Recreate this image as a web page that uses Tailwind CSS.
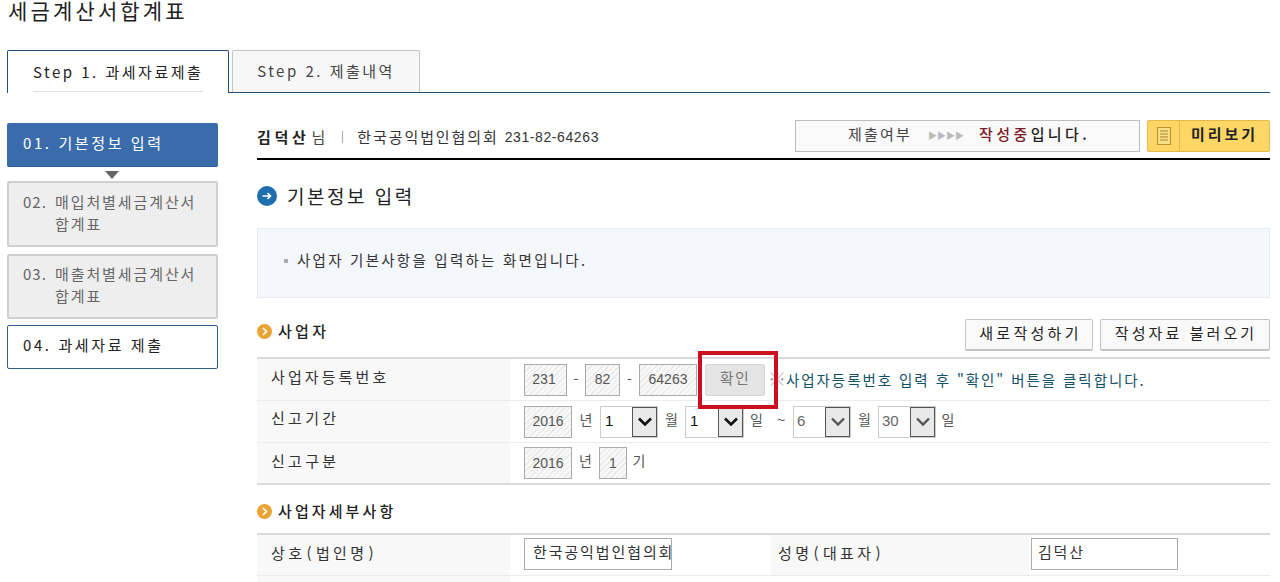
<!DOCTYPE html>
<html lang="ko">
<head>
<meta charset="utf-8">
<script src="https://cdn.jsdelivr.net/npm/@tailwindcss/browser@4"></script>
</head>
<body class="bg-white overflow-hidden font-['Noto_Sans_CJK_KR','Liberation_Sans',sans-serif] text-[#222]">
<div class="w-[1280px] h-[582px] overflow-hidden">
  <div class="h-[50px] pl-[8px]"><h1 class="text-[21px] leading-[20px] font-normal tracking-[3.15px] text-[#222]">세금계산서합계표</h1></div>

  <div class="flex items-end h-[43px] ml-[7px] mr-[10px] border-b border-[#1f4e79] text-[15px] tracking-[2.5px]">
    <div class="w-[222px] h-[43px] -mb-px bg-white border border-b-0 border-[#1f4e79] rounded-t-[2px] flex flex-col items-center">
      <span class="mt-[10px] h-[24px] leading-[21px] w-[170px] text-center whitespace-nowrap">Step 1. 과세자료제출</span>
      <span class="w-[170px] h-px bg-[#dde3ea] mt-[6px]"></span>
    </div>
    <div class="ml-[3px] w-[188px] h-[42px] bg-[#f7f7f7] border border-b-0 border-[#c4c4c4] rounded-t-[2px] text-center leading-[40px] text-[#444]">Step 2. 제출내역</div>
  </div>

  <div class="flex pl-[7px] pr-[10px] pt-[30px]">
    <nav class="w-[211px] shrink-0 text-[15px] tracking-[1.9px]">
      <div class="h-[44px] bg-[#3a6cab] rounded-[2px] text-white flex items-center pl-[16px] pb-[2px] border-b border-[#2e5c96] tracking-[2.6px]">01. 기본정보 입력</div>
      <div class="h-[14px] flex justify-center items-start pt-[4px] pr-[2px]">
        <svg width="14" height="8" viewBox="0 0 14 8"><path d="M0 0h14L7 8z" fill="#666"/></svg>
      </div>
      <div class="h-[66px] bg-[#eeeeee] rounded-[2px] border-2 border-[#cfcfcf] text-[#666] flex pl-[14px] pt-[8px] leading-[22px]">
        <span class="w-[32px] shrink-0 tracking-[1px]">02.</span><span class="w-[155px]">매입처별세금계산서<br>합계표</span>
      </div>
      <div class="h-[65px] mt-[7px] bg-[#eeeeee] rounded-[2px] border-2 border-[#cfcfcf] text-[#666] flex pl-[14px] pt-[7px] leading-[22px]">
        <span class="w-[32px] shrink-0 tracking-[1px]">03.</span><span class="w-[155px]">매출처별세금계산서<br>합계표</span>
      </div>
      <div class="h-[44px] mt-[6px] bg-white rounded-[2px] border border-[#2a5f92] text-[#222] flex items-center pl-[15px] pb-[3px] tracking-[2.6px]">04. 과세자료 제출</div>
    </nav>

    <main class="ml-[39px] w-[1013px] -mt-[3px]">
      <div class="h-[40px] border-b-[2px] border-black flex items-start justify-between">
        <div class="h-[38px] flex items-center pb-[4px] text-[15px]">
          <b class="font-bold tracking-[3.7px] text-[#222]">김덕산</b>
          <span class="ml-[2px] text-[#444]">님</span>
          <span class="ml-[17px] mr-[13px] w-px h-[12px] bg-[#aaa]"></span>
          <span class="tracking-[1.9px] ml-[1px] text-[#333]">한국공익법인협의회</span>
          <span class="ml-[6px] text-[14px] text-[#333] tracking-[0.6px] font-['Liberation_Sans',sans-serif]">231-82-64263</span>
        </div>
        <div class="flex">
          <div class="w-[345px] h-[32px] bg-[#f9f9f9] border border-[#bdbdbd] flex items-center text-[15px] pb-[3px] tracking-[2.2px] pl-[52px] text-[#444]">
            <span>제출여부</span>
            <span class="ml-[16px] pt-[3px] text-[#bbb] text-[9px] tracking-[0px]">▶▶▶▶</span>
            <span class="ml-[15px] text-[#7a1c2a] font-medium tracking-[3.4px]">작성중</span><span class="text-[#222] font-medium tracking-[3.4px]">입니다.</span>
          </div>
          <div class="ml-[7px] w-[123px] h-[32px] bg-[#fcd766] border border-[#e6b84a] rounded-[2px] flex items-center">
            <div class="w-[32px] h-full flex items-center justify-center border-r border-[#e6b84a]">
              <svg width="14" height="18" viewBox="0 0 14 18" fill="none"><rect x=".5" y=".5" width="13" height="17" fill="#f8e08a" stroke="#b8912c"/><path d="M3 4h8M3 7h8M3 10h8M3 13h8" stroke="#a8842a"/></svg>
            </div>
            <b class="flex-1 text-center text-[15px] pb-[3px] font-bold tracking-[3px] text-[#222]">미리보기</b>
          </div>
        </div>
      </div>

      <div class="flex items-center h-[68px] pt-[3px]">
        <svg width="20" height="20" viewBox="0 0 20 20"><circle cx="10" cy="10" r="10" fill="#1f6fb0"/><path d="M5.5 10h8M10.5 7l3 3-3 3" stroke="#fff" stroke-width="1.6" fill="none"/></svg>
        <h2 class="ml-[10px] text-[19px] font-normal tracking-[2.5px] text-[#222] leading-[24px]">기본정보 입력</h2>
      </div>

      <div class="h-[70px] bg-[#f4f7fc] border border-[#e7ecf3] flex items-center pl-[26px] pb-[7px] text-[14.5px] tracking-[2.25px] text-[#333]">
        <span class="w-[4px] h-[4px] bg-[#aaa] mr-[9px] mt-[2px]"></span>사업자 기본사항을 입력하는 화면입니다.
      </div>

      <div class="flex items-center justify-between h-[32px] mt-[21px] mb-[6px]">
        <div class="flex items-center pb-[7px]">
          <svg width="15" height="15" viewBox="0 0 15 15"><circle cx="7.5" cy="7.5" r="7.5" fill="#eaa233"/><path d="M6 4l3.5 3.5L6 11" stroke="#fff" stroke-width="1.7" fill="none"/></svg>
          <h3 class="ml-[6px] text-[15px] font-medium tracking-[3.3px] text-[#222]">사업자</h3>
        </div>
        <div class="flex gap-[7px] text-[15px]">
          <div class="w-[128px] h-[32px] pb-[3px] bg-[#f9f9f9] border border-[#c4c4c4] border-b-2 rounded-[2px] flex items-center justify-center text-[#222] tracking-[3.3px] pl-[3px]">새로작성하기</div>
          <div class="w-[170px] h-[32px] pb-[3px] bg-[#f9f9f9] border border-[#c4c4c4] border-b-2 rounded-[2px] flex items-center justify-center text-[#222] tracking-[3.1px] pl-[2px]">작성자료 불러오기</div>
        </div>
      </div>

      <div class="border-t-2 border-b-2 border-[#d9d9d9] text-[14px]">
        <div class="flex h-[42px] border-b border-[#ececec]">
          <div class="w-[253px] bg-[#f8f8f8] flex items-center pl-[14px] pb-[5px] text-[15px] tracking-[3.1px] text-[#333]">사업자등록번호</div>
          <div class="flex-1 flex items-center pl-[14px] text-[#555]">
            <span class="w-[43px] h-[32px] pr-[3px] border border-[#aaa] flex items-center justify-center bg-[repeating-linear-gradient(135deg,#e8e8e8_0,#e8e8e8_1px,#f8f8f8_1px,#f8f8f8_4px)] font-['Liberation_Sans',sans-serif]">231</span>
            <span class="w-[18px] text-center">-</span>
            <span class="w-[35px] h-[32px] border border-[#aaa] flex items-center justify-center bg-[repeating-linear-gradient(135deg,#e8e8e8_0,#e8e8e8_1px,#f8f8f8_1px,#f8f8f8_4px)] font-['Liberation_Sans',sans-serif]">82</span>
            <span class="w-[19px] text-center">-</span>
            <span class="w-[58px] h-[32px] border border-[#aaa] flex items-center justify-center bg-[repeating-linear-gradient(135deg,#e8e8e8_0,#e8e8e8_1px,#f8f8f8_1px,#f8f8f8_4px)] font-['Liberation_Sans',sans-serif]">64263</span>
            <span class="relative ml-[8px] w-[60px] h-[32px] pb-[3px] bg-[#e4e4e4] border border-[#d6d6d6] rounded-[2px] flex items-center justify-center text-[15px] text-[#777] tracking-[1.5px]">확인
              <span class="absolute left-[-8px] top-[-14px] w-[80px] h-[58px] border-[4px] border-[#cc1022]"></span>
            </span>
            <span class="ml-[3px] pb-[3px] text-[14.5px] tracking-[1.95px] text-[#125068] whitespace-nowrap"><span class="text-[#aaa] text-[18px] tracking-[0px]">※</span>사업자등록번호 입력 후 "확인" 버튼을 클릭합니다.</span>
          </div>
        </div>
        <div class="flex h-[42px] border-b border-[#ececec]">
          <div class="w-[253px] bg-[#f8f8f8] flex items-center pl-[14px] pb-[7px] text-[15px] tracking-[3.3px] text-[#333]">신고기간</div>
          <div class="flex-1 flex items-center pl-[14px] text-[#555]">
            <span class="w-[48px] h-[32px] border border-[#aaa] flex items-center justify-center bg-[repeating-linear-gradient(135deg,#e8e8e8_0,#e8e8e8_1px,#f8f8f8_1px,#f8f8f8_4px)] font-['Liberation_Sans',sans-serif]">2016</span>
            <span class="w-[28px] text-center pb-[5px]">년</span>
            <span class="w-[58px] h-[32px] border border-[#ccc] flex items-center justify-between pl-[4px] font-['Liberation_Sans',sans-serif] text-[#111] text-[15px]">1
              <span class="w-[25px] h-[30px] bg-[#e9e9e9] border border-[#555] flex items-center justify-center"><svg width="14" height="10" viewBox="0 0 14 10"><path d="M1 1.5l6 6 6-6" stroke="#111" stroke-width="2.6" fill="none"/></svg></span>
            </span>
            <span class="w-[27px] text-center pb-[5px]">월</span>
            <span class="w-[59px] h-[32px] border border-[#ccc] flex items-center justify-between pl-[4px] font-['Liberation_Sans',sans-serif] text-[#111] text-[15px]">1
              <span class="w-[25px] h-[30px] bg-[#e9e9e9] border border-[#555] flex items-center justify-center"><svg width="14" height="10" viewBox="0 0 14 10"><path d="M1 1.5l6 6 6-6" stroke="#111" stroke-width="2.6" fill="none"/></svg></span>
            </span>
            <span class="w-[25px] text-center pb-[5px]">일</span>
            <span class="w-[24px] text-center pb-[3px] font-['Liberation_Sans',sans-serif]">~</span>
            <span class="w-[58px] h-[32px] border border-[#ccc] flex items-center justify-between pl-[3px] font-['Liberation_Sans',sans-serif] text-[#666] text-[15px]">6
              <span class="w-[25px] h-[30px] bg-[#e9e9e9] border border-[#555] flex items-center justify-center"><svg width="14" height="10" viewBox="0 0 14 10"><path d="M1 1.5l6 6 6-6" stroke="#555" stroke-width="2.4" fill="none"/></svg></span>
            </span>
            <span class="w-[27px] text-center pb-[5px]">월</span>
            <span class="w-[58px] h-[32px] border border-[#ccc] flex items-center justify-between pl-[3px] font-['Liberation_Sans',sans-serif] text-[#666] text-[15px]">30
              <span class="w-[25px] h-[30px] bg-[#e9e9e9] border border-[#555] flex items-center justify-center"><svg width="14" height="10" viewBox="0 0 14 10"><path d="M1 1.5l6 6 6-6" stroke="#555" stroke-width="2.4" fill="none"/></svg></span>
            </span>
            <span class="w-[24px] text-center pb-[5px]">일</span>
          </div>
        </div>
        <div class="flex h-[40px]">
          <div class="w-[253px] bg-[#f8f8f8] flex items-center pl-[14px] pb-[3px] text-[15px] tracking-[3.3px] text-[#333]">신고구분</div>
          <div class="flex-1 flex items-center pl-[14px] text-[#555]">
            <span class="w-[48px] h-[32px] border border-[#aaa] flex items-center justify-center bg-[repeating-linear-gradient(135deg,#e8e8e8_0,#e8e8e8_1px,#f8f8f8_1px,#f8f8f8_4px)] font-['Liberation_Sans',sans-serif]">2016</span>
            <span class="w-[27px] text-center pb-[5px]">년</span>
            <span class="w-[28px] h-[32px] border border-[#aaa] flex items-center justify-center bg-[repeating-linear-gradient(135deg,#e8e8e8_0,#e8e8e8_1px,#f8f8f8_1px,#f8f8f8_4px)] font-['Liberation_Sans',sans-serif]">1</span>
            <span class="w-[24px] text-center pb-[5px]">기</span>
          </div>
        </div>
      </div>

      <div class="flex items-center h-[48px] pt-[4px]">
        <svg width="15" height="15" viewBox="0 0 15 15"><circle cx="7.5" cy="7.5" r="7.5" fill="#eaa233"/><path d="M6 4l3.5 3.5L6 11" stroke="#fff" stroke-width="1.7" fill="none"/></svg>
        <h3 class="ml-[6px] text-[15px] font-medium tracking-[3.1px] text-[#222]">사업자세부사항</h3>
      </div>

      <div class="border-t-2 border-[#d9d9d9] text-[15px]">
        <div class="flex h-[41px] border-b border-[#ececec]">
          <div class="w-[253px] bg-[#f8f8f8] flex items-center pl-[14px] pb-[4px] tracking-[3.4px] text-[#333] whitespace-nowrap">상호<span class="mx-[1px]">(</span>법인명<span class="mx-[1px]">)</span></div>
          <div class="w-[261px] flex items-center pl-[14px] pb-[2px]">
            <span class="w-[148px] h-[32px] border border-[#aaa] flex items-center pl-[8px] pb-[3px] overflow-hidden whitespace-nowrap text-[#333] tracking-[1.9px]">한국공익법인협의회</span>
          </div>
          <div class="w-[258px] bg-[#f8f8f8] flex items-center pl-[7px] pb-[4px] tracking-[3.4px] text-[#333] whitespace-nowrap">성명<span class="mx-[1px]">(</span>대표자<span class="mx-[1px]">)</span></div>
          <div class="flex-1 flex items-center pl-[2px] pb-[2px]">
            <span class="w-[147px] h-[32px] border border-[#aaa] flex items-center pl-[6px] pb-[3px] text-[#333] tracking-[1.8px]">김덕산</span>
          </div>
        </div>
        <div class="flex h-[10px]">
          <div class="w-[253px] bg-[#f8f8f8]"></div>
        </div>
      </div>
    </main>
  </div>
</div>
</body>
</html>
